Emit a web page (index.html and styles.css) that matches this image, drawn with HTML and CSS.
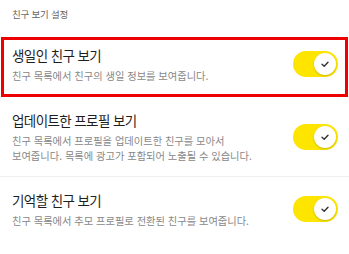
FILE: index.html
```html
<!DOCTYPE html>
<html lang="ko">
<head>
<meta charset="utf-8">
<link rel="stylesheet" href="styles.css">
</head>
<body>
<div class="page">
  <div class="section-title">친구 보기 설정</div>
  <div class="item highlighted">
    <div class="text">
      <div class="title">생일인 친구 보기</div>
      <div class="desc">친구 목록에서 친구의 생일 정보를 보여줍니다.</div>
    </div>
    <div class="toggle"><span class="knob"><svg viewBox="0 0 10 10" width="10" height="10"><path d="M2 5.2 L4.2 7.2 L8 3.2" fill="none" stroke="#333" stroke-width="1.4" stroke-linecap="round" stroke-linejoin="round"/></svg></span></div>
  </div>
  <div class="item">
    <div class="text">
      <div class="title">업데이트한 프로필 보기</div>
      <div class="desc">친구 목록에서 프로필을 업데이트한 친구를 모아서<br>보여줍니다. 목록에 광고가 포함되어 노출될 수 있습니다.</div>
    </div>
    <div class="toggle"><span class="knob"><svg viewBox="0 0 10 10" width="10" height="10"><path d="M2 5.2 L4.2 7.2 L8 3.2" fill="none" stroke="#333" stroke-width="1.4" stroke-linecap="round" stroke-linejoin="round"/></svg></span></div>
  </div>
  <div class="item">
    <div class="text">
      <div class="title">기억할 친구 보기</div>
      <div class="desc">친구 목록에서 추모 프로필로 전환된 친구를 보여줍니다.</div>
    </div>
    <div class="toggle"><span class="knob"><svg viewBox="0 0 10 10" width="10" height="10"><path d="M2 5.2 L4.2 7.2 L8 3.2" fill="none" stroke="#333" stroke-width="1.4" stroke-linecap="round" stroke-linejoin="round"/></svg></span></div>
  </div>
</div>
</body>
</html>
```
FILE: styles.css
```css
html, body {
  margin: 0;
  padding: 0;
  background: #fff;
}
body {
  font-family: "Noto Sans CJK KR", "Noto Sans", sans-serif;
  width: 349px;
  height: 254px;
  overflow: hidden;
}
.page {
  display: flex;
  flex-direction: column;
}
.section-title {
  font-size: 9.5px;
  line-height: 14px;
  color: #666;
  padding: 7px 12px 11px;
  letter-spacing: -0.2px;
}
.item {
  position: relative;
  display: flex;
  align-items: center;
  justify-content: space-between;
  padding: 13px 12px 13px 12px;
  border-bottom: 1px solid #efefef;
}
.item:last-child {
  border-bottom: none;
}
.highlighted::after {
  content: "";
  position: absolute;
  left: 1px;
  right: 1px;
  top: 5px;
  bottom: -1px;
  border: 3px solid #ee0000;
  pointer-events: none;
}
.text {
  display: flex;
  flex-direction: column;
  gap: 3px;
}
.title {
  font-size: 13.5px;
  line-height: 20px;
  letter-spacing: -0.6px;
  color: #1e1e1e;
}
.desc {
  font-size: 10.25px;
  line-height: 15px;
  color: #888;
}
.toggle {
  flex: none;
  width: 45px;
  height: 26px;
  border-radius: 13px;
  background: #fee500;
  display: flex;
  align-items: center;
  justify-content: flex-end;
  padding: 0 2px;
  box-sizing: border-box;
  margin-right: -1px;
}
.knob {
  width: 22px;
  height: 22px;
  border-radius: 50%;
  background: #fff;
  box-shadow: 0 1px 2px rgba(0,0,0,0.2);
  display: flex;
  align-items: center;
  justify-content: center;
}
```
